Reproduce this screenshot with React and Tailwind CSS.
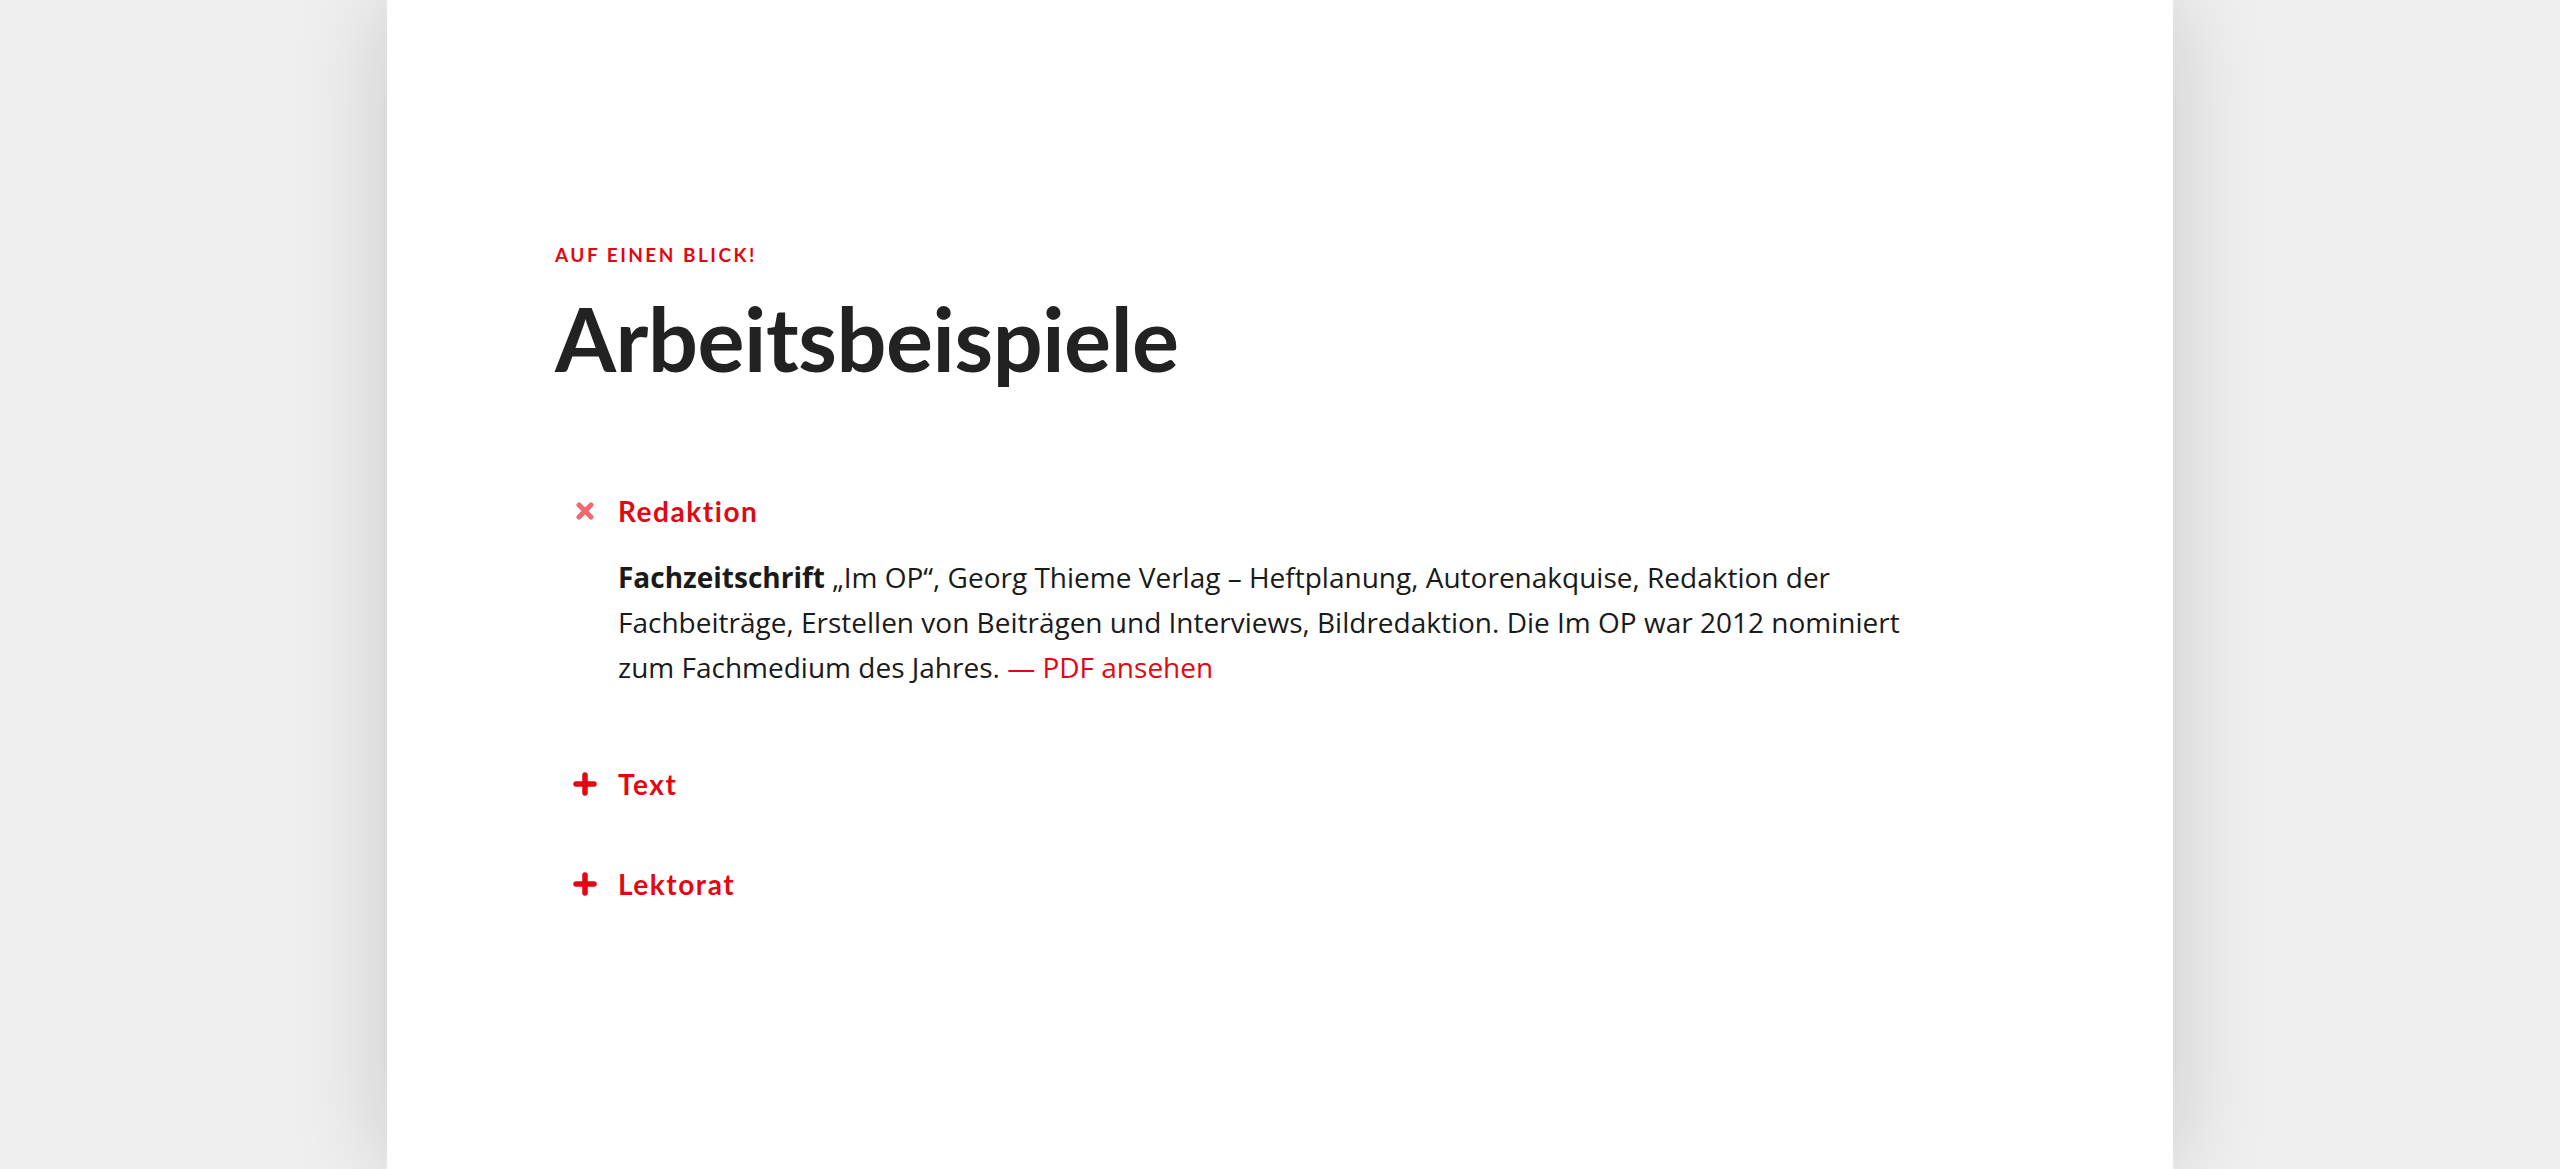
import React, { useState } from 'react';

const items = [
  {
    title: 'Redaktion',
    body: (
      <>
        <strong className="font-bold">Fachzeitschrift</strong> „Im OP“, Georg Thieme Verlag – Heftplanung, Autorenakquise, Redaktion der
        Fachbeiträge, Erstellen von Beiträgen und Interviews, Bildredaktion. Die Im OP war 2012 nominiert zum Fachmedium des
        Jahres. <a href="#" className="text-[#e30613]">— PDF ansehen</a>
      </>
    ),
  },
  { title: 'Text', body: null },
  { title: 'Lektorat', body: null },
];

const CloseIcon = () => (
  <svg width="20" height="20" viewBox="0 0 20 20" className="opacity-60">
    <path d="M4 4 L16 16 M16 4 L4 16" stroke="#e30613" strokeWidth="5" strokeLinecap="round" fill="none" />
  </svg>
);

const PlusIcon = () => (
  <svg width="24" height="24" viewBox="0 0 24 24">
    <path d="M12 3 V21 M3 12 H21" stroke="#e30613" strokeWidth="5.5" strokeLinecap="round" fill="none" />
  </svg>
);

const App = () => {
  const [open, setOpen] = useState(0); // only one entry open at a time

  return (
    <div className="min-h-screen bg-[#efefef] font-['Lato',sans-serif]">
      <div className="mx-auto w-[1786px] min-h-[1169px] bg-white shadow-[0_0_90px_rgba(0,0,0,0.16)] pl-[168px] pr-[168px] pt-[244px]">
        <p className="text-[19px] leading-[22px] font-bold tracking-[0.13em] uppercase text-[#e30613]">Auf einen Blick!</p>
        <h2 className="mt-[22px] text-[88px] leading-[100px] font-bold text-[#222222] tracking-[-0.005em]">Arbeitsbeispiele</h2>

        <div className="mt-[104px] flex flex-col gap-[62px]">
          {items.map((item, i) => (
            <div key={item.title}>
              <button
                type="button"
                onClick={() => setOpen(open === i ? -1 : i)}
                className="flex items-center gap-[21px] pl-[18px] cursor-pointer"
              >
                <span className="w-[24px] h-[24px] flex items-center justify-center">
                  {open === i ? <CloseIcon /> : <PlusIcon />}
                </span>
                <span className="text-[28px] leading-[38px] font-bold tracking-[0.055em] text-[#e30613]">{item.title}</span>
              </button>
              {open === i && item.body && (
                <p className="mt-[25px] mb-[13px] pl-[63px] w-[1375px] font-['Open_Sans',sans-serif] text-[28px] leading-[45px] text-[#1a1a1a]">
                  {item.body}
                </p>
              )}
            </div>
          ))}
        </div>
      </div>
    </div>
  );
};

export default App;
